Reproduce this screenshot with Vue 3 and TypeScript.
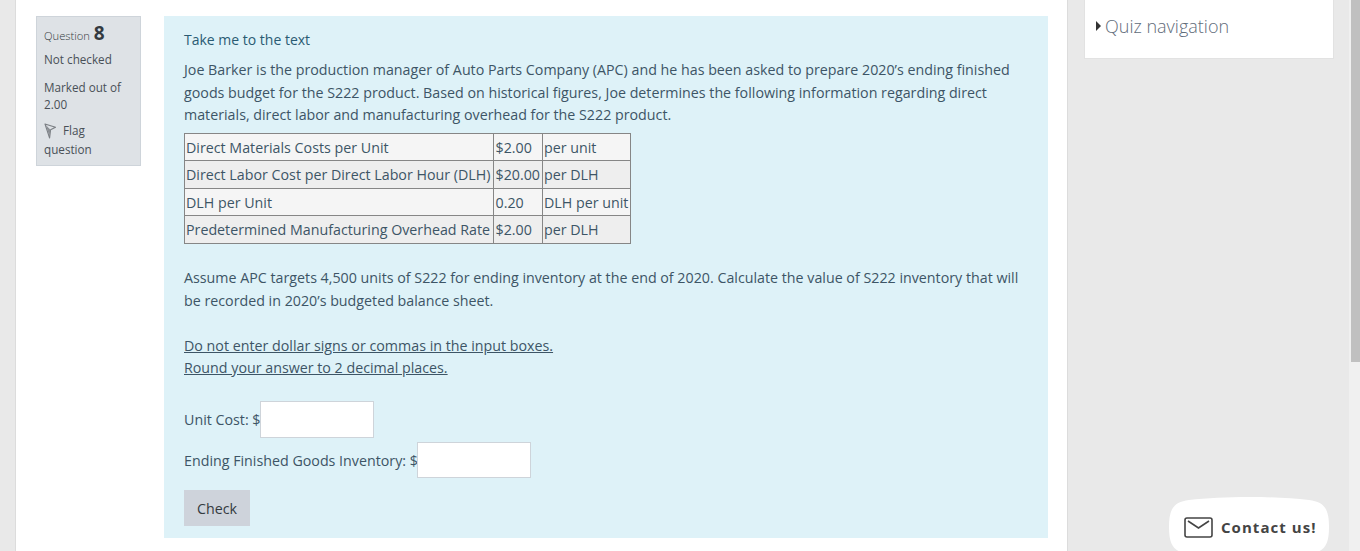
<script setup lang="ts">
const rows = [
  ['Direct Materials Costs per Unit', '$2.00', 'per unit'],
  ['Direct Labor Cost per Direct Labor Hour (DLH)', '$20.00', 'per DLH'],
  ['DLH per Unit', '0.20', 'DLH per unit'],
  ['Predetermined Manufacturing Overhead Rate', '$2.00', 'per DLH'],
]
</script>

<template>
  <div class="page">
    <main class="main">
      <aside class="info">
        <h3 class="qno">Question <b>8</b></h3>
        <div class="state">Not checked</div>
        <div class="grade">Marked out of 2.00</div>
        <div class="flag">
          <svg class="flag-icon" width="12" height="16" viewBox="0 0 12 16">
            <path d="M1 1 L11.5 4.2 L6.6 6.8 L5.6 15 Z" fill="none" stroke="#7b7f84" stroke-width="1.1" stroke-linejoin="round" />
            <path d="M1.8 2 L6.4 6.8 L5.5 13.5 Z" fill="#8b8f94" />
          </svg>
          Flag question
        </div>
      </aside>

      <section class="content">
        <p class="skip">Take me to the text</p>
        <p class="intro">Joe Barker is the production manager of Auto Parts Company (APC) and he has been asked to prepare 2020’s ending finished goods budget for the S222 product. Based on historical figures, Joe determines the following information regarding direct materials, direct labor and manufacturing overhead for the S222 product.</p>
        <table class="costs">
          <tbody>
            <tr v-for="row in rows" :key="row[0]">
              <td v-for="cell in row" :key="cell">{{ cell }}</td>
            </tr>
          </tbody>
        </table>
        <p class="assume">Assume APC targets 4,500 units of S222 for ending inventory at the end of 2020. Calculate the value of S222 inventory that will be recorded in 2020’s budgeted balance sheet.</p>
        <p class="notes"><u>Do not enter dollar signs or commas in the input boxes.</u><br /><u>Round your answer to 2 decimal places.</u></p>
        <div class="field first">Unit Cost: $<input type="text" /></div>
        <div class="field second">Ending Finished Goods Inventory: $<input type="text" /></div>
        <button class="check" type="button">Check</button>
      </section>
    </main>

    <aside class="side">
      <div class="block">
        <span class="caret"></span>
        <span class="block-title">Quiz navigation</span>
      </div>
    </aside>

    <div class="scrollbar"><div class="thumb"></div></div>

    <div class="contact">
      <svg width="29" height="21" viewBox="0 0 29 21">
        <rect x="1" y="1" width="27" height="19" rx="2" fill="none" stroke="#444" stroke-width="1.6" />
        <path d="M4 4 L14.5 11 L25 4" fill="none" stroke="#444" stroke-width="1.6" />
      </svg>
      <span>Contact us!</span>
    </div>
  </div>
</template>

<style scoped>
.page {
  position: relative;
  display: flex;
  height: 551px;
  overflow: hidden;
  padding-left: 15px;
  box-sizing: border-box;
  background: #e9e9e9;
  font-family: "Open Sans", "Noto Sans", sans-serif;
  font-size: 14.25px;
  color: #3d5566;
}
.main {
  display: flex;
  align-items: flex-start;
  gap: 23px;
  width: 1053px;
  height: 551px;
  flex: none;
  box-sizing: border-box;
  padding: 16px 19px 0 20px;
  background: #fff;
  border-left: 1px solid #dcdcdc;
  border-right: 1px solid #dcdcdc;
}
.info {
  width: 105px;
  height: 150px;
  flex: none;
  box-sizing: border-box;
  padding: 6px 7px;
  background: #dee2e6;
  border: 1px solid #ced4da;
  font-size: 11.7px;
  line-height: 17.6px;
  color: #495057;
}
.qno { margin: 0; font-size: 11.2px; font-weight: 300; line-height: 20px; color: #343a40; }
.qno b { font-size: 19px; color: #343a40; font-weight: 700; margin-left: 1px; }
.state { margin-top: 5px; }
.grade { margin-top: 10px; }
.flag { margin-top: 7px; line-height: 19px; }
.flag-icon { vertical-align: -4px; margin-right: 4px; margin-top: -2px; }
.content {
  width: 884px;
  height: 522px;
  flex: none;
  box-sizing: border-box;
  padding: 13px 20px 0;
  background: #def2f8;
  line-height: 22.4px;
}
.content p { margin: 0; }
.skip { color: #2a5b73; font-size: 14px; }
.content .intro { margin-top: 8px; }
.costs {
  margin-top: 6px;
  border-collapse: collapse;
  line-height: 20.5px;
}
.costs td {
  padding: 4px 2px 2px 1px;
  border: 1px solid #868686;
  background: #f5f5f5;
}
.costs td:first-child { padding-right: 3px; }
.costs tr:nth-child(even) td { background: #eeeeee; }
.content .assume { margin-top: 22px; line-height: 23px; }
.content .notes { margin-top: 23px; line-height: 22px; }
.field { display: flex; align-items: center; }
.field.first { margin-top: 22px; }
.field.second { margin-top: 2px; }
.field input {
  width: 114px;
  height: 37px;
  box-sizing: border-box;
  margin-left: -1px;
  margin-bottom: 2px;
  background: #fff;
  border: 1px solid #ced4da;
  padding: 0;
}
.field.second input { height: 36px; margin-bottom: 4px; }
.check {
  display: block;
  margin-top: 8px;
  width: 66px;
  height: 36px;
  border: 0;
  padding: 4px 0 0;
  background: #ced3db;
  color: #343a40;
  font: inherit;
}
.side { width: 283px; flex: none; padding-left: 16px; box-sizing: border-box; }
.block {
  display: flex;
  align-items: center;
  gap: 4px;
  width: 250px;
  height: 59px;
  box-sizing: border-box;
  padding: 0 0 6px 11px;
  background: #fff;
  border: 1px solid #e2e2e2;
  border-top: 0;
}
.caret {
  width: 0;
  height: 0;
  border-left: 5px solid #333;
  border-top: 5px solid transparent;
  border-bottom: 5px solid transparent;
}
.block-title { font-size: 18px; font-weight: 300; color: #5f6c7a; }
.scrollbar {
  position: absolute;
  top: 0;
  right: 0;
  width: 11px;
  height: 551px;
  background: #f0f0f0;
}
.thumb { height: 362px; margin-left: 2px; background: #c0c0c0; }
.contact {
  position: absolute;
  left: 1169px;
  top: 497px;
  width: 160px;
  height: 60px;
  box-sizing: border-box;
  padding: 20px 0 0 15px;
  display: flex;
  align-items: flex-start;
  gap: 8px;
  background: #fff;
  clip-path: path('M0,30 C0,10 6,5 20,3 C55,-1 105,-1 140,3 C154,5 160,10 160,30 C160,50 154,55 140,57 C105,61 55,61 20,57 C6,55 0,50 0,30 Z');
  font-size: 15px;
  font-weight: 700;
  letter-spacing: 1.05px;
  color: #444;
}
</style>

<style>
html, body { margin: 0; padding: 0; overflow: hidden; }
</style>
